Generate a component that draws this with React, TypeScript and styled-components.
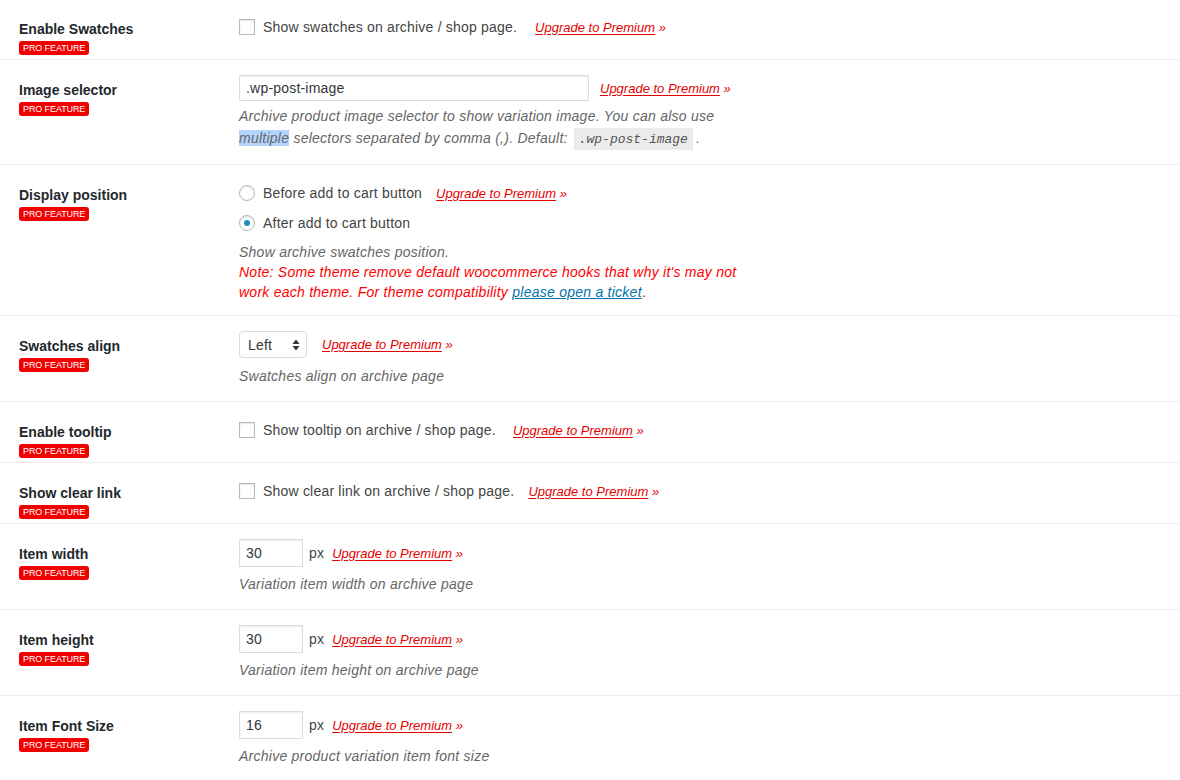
import React from 'react'
import styled, { createGlobalStyle } from 'styled-components'

const GlobalStyle = createGlobalStyle`
  html, body {
    margin: 0;
    padding: 0;
    background: #ffffff;
  }
  body {
    font-family: "Liberation Sans", Arial, sans-serif;
    font-size: 14px;
    color: #444;
    overflow: hidden;
  }
`

const Table = styled.div`
  margin-top: -1px;
  width: 1180px;
`

const Row = styled.div`
  display: grid;
  grid-template-columns: 239px 1fr;
  border-bottom: 1px solid #ececec;
`

const LabelCell = styled.div`
  padding: 21px 0 4px 19px;
`

const Label = styled.div`
  font-weight: bold;
  font-size: 14px;
  line-height: 18px;
  color: #23282d;
`

const Badge = styled.span`
  display: inline-block;
  margin-top: 3px;
  height: 14px;
  padding: 0 4px;
  background: #f20000;
  color: #fff;
  border-radius: 3px;
  font-size: 9px;
  line-height: 14px;
  letter-spacing: -0.1px;
  vertical-align: top;
`

const ControlCell = styled.div`
  padding: 15px 0 15px 0;
  letter-spacing: 0.2px;
`

const Line = styled.div<{ $gap?: number }>`
  display: flex;
  align-items: center;
  min-height: 26px;
  margin-top: ${({ $gap }) => ($gap ? `${$gap}px` : '0')};
  color: #444;
`

const Check = styled.span`
  display: inline-block;
  box-sizing: border-box;
  width: 16px;
  height: 16px;
  border: 1px solid #b4b9be;
  background: #fff;
  box-shadow: inset 0 1px 2px rgba(0, 0, 0, 0.1);
  margin-right: 8px;
`

const Radio = styled.span<{ $on?: boolean }>`
  display: inline-flex;
  align-items: center;
  justify-content: center;
  box-sizing: border-box;
  width: 16px;
  height: 16px;
  border-radius: 50%;
  border: 1px solid #b4b9be;
  background: #fff;
  box-shadow: inset 0 1px 2px rgba(0, 0, 0, 0.1);
  margin-right: 8px;

  &::after {
    content: '';
    display: ${({ $on }) => ($on ? 'block' : 'none')};
    width: 6px;
    height: 6px;
    border-radius: 50%;
    background: #1e8cbe;
  }
`

const TextInput = styled.div<{ $w: number; $h?: number }>`
  box-sizing: border-box;
  width: ${({ $w }) => $w}px;
  height: ${({ $h }) => $h || 26}px;
  border: 1px solid #dcdcdc;
  box-shadow: inset 0 1px 2px rgba(0, 0, 0, 0.07);
  background: #fff;
  padding: 0 6px;
  display: flex;
  align-items: center;
  color: #32373c;
  font-size: 14px;
`

const SelectBox = styled.div`
  position: relative;
  box-sizing: border-box;
  width: 68px;
  height: 27px;
  border: 1px solid #dcdcdc;
  border-radius: 4px;
  background: #fff;
  padding: 0 8px;
  display: flex;
  align-items: center;
  color: #32373c;
`

const Arrows = styled.svg`
  position: absolute;
  right: 6px;
  top: 7px;
`

const Unit = styled.span`
  margin-left: 6px;
  color: #444;
`

const Upgrade = styled.span<{ $ml: number }>`
  margin-left: ${({ $ml }) => $ml}px;
  font-style: italic;
  font-size: 13px;
  letter-spacing: 0;
  color: #e60000;
  white-space: nowrap;
`

const UpgradeLink = styled.a`
  color: #e60000;
  text-decoration: underline;
  text-underline-offset: 2px;
`

const Desc = styled.p<{ $mt?: number; $lh?: number; $mb?: number }>`
  margin: ${({ $mt }) => ($mt === undefined ? 6 : $mt)}px 0 ${({ $mb }) => $mb || 0}px;
  font-style: italic;
  line-height: ${({ $lh }) => $lh || 20}px;
  letter-spacing: 0.25px;
  color: #666;
  max-width: 515px;
`

const Note = styled.span`
  color: #f00;
`

const TicketLink = styled.a`
  color: #0073aa;
  text-decoration: underline;
  margin-right: 1px;
`

const Highlight = styled.span`
  background: #b3d4fc;
`

const Code = styled.code`
  margin: 0 3px 0 6px;
  padding: 4px 5px 3px;
  line-height: 14px;
  background: #ebebeb;
  font-family: "Liberation Mono", "DejaVu Sans Mono", monospace;
  font-style: italic;
  font-size: 13px;
  letter-spacing: 0;
  color: #555;
`

const Premium = ({ ml }: { ml: number }) => (
  <Upgrade $ml={ml}>
    <UpgradeLink>Upgrade to Premium</UpgradeLink> »
  </Upgrade>
)

const Setting = ({ label, children }: { label: string; children: React.ReactNode }) => (
  <Row>
    <LabelCell>
      <Label>{label}</Label>
      <Badge>PRO FEATURE</Badge>
    </LabelCell>
    <ControlCell>{children}</ControlCell>
  </Row>
)

const SelectArrows = () => (
  <Arrows width="8" height="12" viewBox="0 0 8 12">
    <path d="M4 0.5 L7.5 5 L0.5 5 Z" fill="#333" />
    <path d="M4 11.5 L7.5 7 L0.5 7 Z" fill="#333" />
  </Arrows>
)

const App = () => (
  <>
    <GlobalStyle />
    <Table>
      <Setting label="Enable Swatches">
        <Line>
          <Check />
          Show swatches on archive / shop page.
          <Premium ml={18} />
        </Line>
      </Setting>

      <Setting label="Image selector">
        <Line>
          <TextInput $w={350}>.wp-post-image</TextInput>
          <Premium ml={11} />
        </Line>
        <Desc $mt={4} $lh={22}>
          Archive product image selector to show variation image. You can also use{' '}
          <Highlight>multiple</Highlight> selectors separated by comma (,). Default:
          <Code>.wp-post-image</Code>.
        </Desc>
      </Setting>

      <Setting label="Display position">
        <Line>
          <Radio />
          Before add to cart button
          <Premium ml={14} />
        </Line>
        <Line $gap={4}>
          <Radio $on />
          After add to cart button
        </Line>
        <Desc $mb={-2}>
          Show archive swatches position.
          <br />
          <Note>
            Note: Some theme remove default woocommerce hooks that why it's may not work each theme. For
            theme compatibility <TicketLink>please open a ticket</TicketLink>.
          </Note>
        </Desc>
      </Setting>

      <Setting label="Swatches align">
        <Line>
          <SelectBox>
            Left
            <SelectArrows />
          </SelectBox>
          <Premium ml={15} />
        </Line>
        <Desc $mt={8}>Swatches align on archive page</Desc>
      </Setting>

      <Setting label="Enable tooltip">
        <Line>
          <Check />
          Show tooltip on archive / shop page.
          <Premium ml={17} />
        </Line>
      </Setting>

      <Setting label="Show clear link">
        <Line>
          <Check />
          Show clear link on archive / shop page.
          <Premium ml={14} />
        </Line>
      </Setting>

      <Setting label="Item width">
        <Line>
          <TextInput $w={64} $h={28}>30</TextInput>
          <Unit>px</Unit>
          <Premium ml={8} />
        </Line>
        <Desc $mt={7}>Variation item width on archive page</Desc>
      </Setting>

      <Setting label="Item height">
        <Line>
          <TextInput $w={64} $h={28}>30</TextInput>
          <Unit>px</Unit>
          <Premium ml={8} />
        </Line>
        <Desc $mt={7}>Variation item height on archive page</Desc>
      </Setting>

      <Setting label="Item Font Size">
        <Line>
          <TextInput $w={64} $h={28}>16</TextInput>
          <Unit>px</Unit>
          <Premium ml={8} />
        </Line>
        <Desc $mt={7}>Archive product variation item font size</Desc>
      </Setting>
    </Table>
  </>
)

export default App
